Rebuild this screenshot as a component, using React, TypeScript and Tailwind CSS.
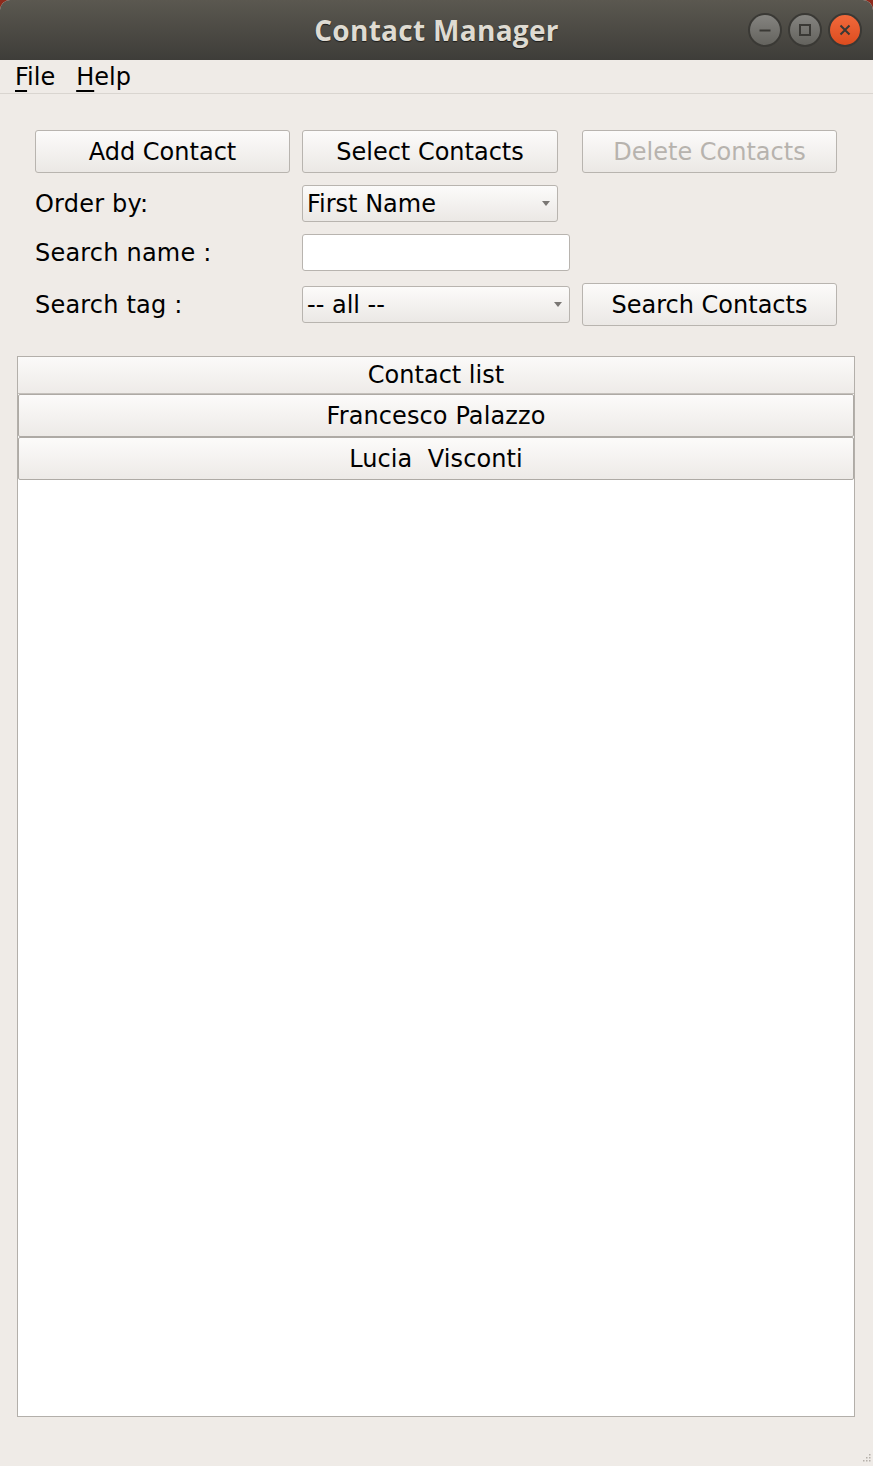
import React from "react";

const font = { fontFamily: '"DejaVu Sans", sans-serif' };

function WinButton({ kind }: { kind: "min" | "max" | "close" }) {
  const close = kind === "close";
  return (
    <div
      className={
        "flex h-[34px] w-[34px] items-center justify-center rounded-full border-2 border-[#3a3935] " +
        (close
          ? "bg-gradient-to-b from-[#f2693b] to-[#dc4c1e]"
          : "bg-gradient-to-b from-[#858480] to-[#64635e]")
      }
    >
      <svg width="16" height="16" viewBox="0 0 16 16">
        {kind === "min" && <path d="M2.5 8.5h11" stroke="#3a3935" strokeWidth="2" />}
        {kind === "max" && <rect x="3" y="3" width="10" height="10" fill="none" stroke="#3a3935" strokeWidth="2" />}
        {close && <path d="M3.5 3.5l9 9M12.5 3.5l-9 9" stroke="#3a3935" strokeWidth="2" />}
      </svg>
    </div>
  );
}

function Button({ label, disabled, className = "" }: { label: string; disabled?: boolean; className?: string }) {
  return (
    <button
      className={
        "flex h-[43px] items-center justify-center rounded-[3px] border border-[#b8b4af] bg-gradient-to-b from-[#fcfbfa] to-[#ebe8e5] text-[24px] " +
        (disabled ? "text-[#b7b3ae] " : "text-black ") +
        className
      }
    >
      {label}
    </button>
  );
}

function Combo({ value, className = "" }: { value: string; className?: string }) {
  return (
    <div
      className={
        "flex h-[37px] items-center justify-between rounded-[3px] border border-[#b8b4af] bg-gradient-to-b from-[#fcfbfa] to-[#ebe8e5] pl-[4px] pr-[7px] text-[24px] text-black " +
        className
      }
    >
      <span>{value}</span>
      <svg width="8" height="5" viewBox="0 0 8 5">
        <path d="M0 0h8L4 5z" fill="#7a7774" />
      </svg>
    </div>
  );
}

function Label({ text }: { text: string }) {
  return <div className="flex items-center text-[24px] tracking-[0.2px] text-black">{text}</div>;
}

export default function App() {
  const contacts = ["Francesco Palazzo", "Lucia  Visconti"];
  return (
    <div className="h-[1466px] w-[873px] overflow-hidden bg-[#8e2a1c]" style={font}>
      <div className="flex h-full flex-col overflow-hidden rounded-t-[10px] bg-[#efebe7]">
        {/* title bar */}
        <div className="relative flex h-[60px] items-center justify-center bg-gradient-to-b from-[#5b5850] to-[#3e3d39]">
          <span
            className="text-[28px] font-bold tracking-[0.3px] text-[#dfdbd2] [text-shadow:0_1px_1px_#1e1d1a]"
            style={{ fontFamily: '"Open Sans", sans-serif' }}
          >
            Contact Manager
          </span>
          <div className="absolute right-[11px] top-[13px] flex gap-[6px]">
            <WinButton kind="min" />
            <WinButton kind="max" />
            <WinButton kind="close" />
          </div>
        </div>

        {/* menu bar */}
        <div className="flex h-[34px] items-center gap-[21px] border-b border-[#d9d5d0] pl-[15px] text-[24px] text-black">
          <span>
            <span className="underline decoration-2 underline-offset-[5px]">F</span>ile
          </span>
          <span>
            <span className="underline decoration-2 underline-offset-[5px]">H</span>elp
          </span>
        </div>

        {/* form */}
        <div className="flex flex-col px-[35px] pt-[36px]">
          <div className="grid grid-cols-[255px_268px_255px] gap-x-[12px]">
            <Button label="Add Contact" />
            <Button label="Select Contacts" className="w-[256px]" />
            <Button label="Delete Contacts" disabled />
          </div>
          <div className="mt-[12px] grid grid-cols-[255px_268px_255px] gap-x-[12px]">
            <Label text="Order by:" />
            <Combo value="First Name" className="w-[256px]" />
          </div>
          <div className="mt-[12px] grid grid-cols-[255px_268px_255px] gap-x-[12px]">
            <Label text="Search name :" />
            <div className="h-[37px] rounded-[3px] border border-[#b8b4af] bg-white" />
          </div>
          <div className="mt-[12px] grid grid-cols-[255px_268px_255px] items-center gap-x-[12px]">
            <Label text="Search tag :" />
            <Combo value="-- all --" />
            <Button label="Search Contacts" />
          </div>
        </div>

        {/* list */}
        <div className="ml-[17px] mt-[30px] flex h-[1061px] w-[838px] flex-col border border-[#b3afaa] bg-white">
          <div className="flex h-[37px] items-center justify-center border-b border-[#c4c0bb] bg-gradient-to-b from-[#fbfaf9] to-[#eeebe8] text-[24px] text-black">
            Contact list
          </div>
          {contacts.map((c) => (
            <div
              key={c}
              className="flex h-[43px] items-center justify-center whitespace-pre rounded-[2px] border border-[#aeaaa5] bg-gradient-to-b from-[#fcfbfa] to-[#edeae7] text-[24px] tracking-[0.1px] text-black"
            >
              {c}
            </div>
          ))}
        </div>

        {/* bottom with grip */}
        <div className="flex flex-1 items-end justify-end pb-[2px] pr-[2px]">
          <svg width="10" height="10" viewBox="0 0 10 10">
            <rect x="8" y="0" width="1.5" height="1.5" fill="#b5b0aa" />
            <rect x="5" y="3" width="1.5" height="1.5" fill="#b5b0aa" />
            <rect x="8" y="3" width="1.5" height="1.5" fill="#b5b0aa" />
            <rect x="2" y="6" width="1.5" height="1.5" fill="#b5b0aa" />
            <rect x="5" y="6" width="1.5" height="1.5" fill="#b5b0aa" />
            <rect x="8" y="6" width="1.5" height="1.5" fill="#b5b0aa" />
          </svg>
        </div>
      </div>
    </div>
  );
}
